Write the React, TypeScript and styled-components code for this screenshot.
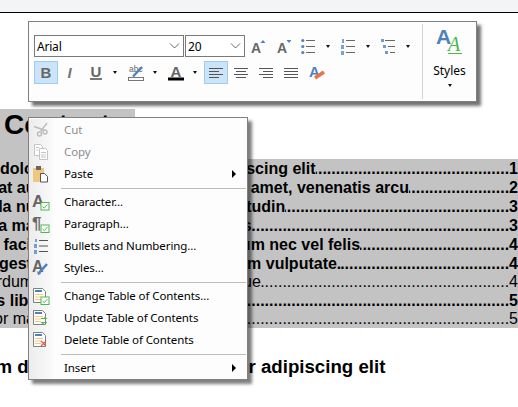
import React from 'react';
import styled, { createGlobalStyle } from 'styled-components';

const GlobalStyle = createGlobalStyle`
  html, body {
    margin: 0;
    padding: 0;
    background: #fff;
    overflow: hidden;
  }
  body {
    font-family: "Liberation Sans", Arial, sans-serif;
  }
`;

const Page = styled.div`
  position: relative;
  width: 518px;
  height: 407px;
  overflow: hidden;
`;

const TopBar = styled.div`
  height: 12px;
  background: #f3f4f6;
  border-bottom: 1px solid #000;
`;

const Doc = styled.div`
  padding-top: 96px;
  color: #000;
`;

const Title = styled.h1`
  box-sizing: border-box;
  width: 135px;
  height: 50px;
  margin: 0;
  padding-left: 4px;
  background: #c3c3c3;
  font-size: 28px;
  font-weight: 700;
  line-height: 32px;
  white-space: nowrap;
`;

const TocBlock = styled.div`
  background: #c3c3c3;
  overflow: hidden;
`;

const TocRow = styled.div<{ $bold: boolean; $indent: number }>`
  display: flex;
  margin-left: ${(p) => p.$indent}px;
  height: ${(p) => (p.$bold ? 19 : 18)}px;
  line-height: ${(p) => (p.$bold ? 19 : 18)}px;
  font-size: 16px;
  font-weight: ${(p) => (p.$bold ? 700 : 400)};
  white-space: nowrap;
`;

const Leader = styled.span`
  flex: 1;
  min-width: 0;
  overflow: hidden;
  direction: rtl;
`;

const Heading2 = styled.h2`
  margin: 28px 0 0 -105px;
  font-size: 18.67px;
  line-height: 22px;
  font-weight: 700;
  white-space: nowrap;
`;

const Toolbar = styled.div`
  position: absolute;
  left: 28px;
  top: 21px;
  box-sizing: border-box;
  width: 449px;
  height: 81px;
  display: flex;
  background: #fdfdfd;
  border: 1px solid #808080;
  box-shadow: 4px 4px 3px rgba(0, 0, 0, 0.55);
`;

const ToolRows = styled.div`
  width: 393px;
  box-sizing: border-box;
  padding: 13px 0 0 5px;
  display: flex;
  flex-direction: column;
  gap: 4px;
`;

const ToolRow = styled.div`
  display: flex;
  align-items: center;
  height: 22px;
`;

const ToolRowTall = styled(ToolRow)`
  height: 23px;
`;

const SelectBox = styled.div<{ $w: number; $mr?: number }>`
  box-sizing: border-box;
  width: ${(p) => p.$w}px;
  height: 22px;
  margin-right: ${(p) => p.$mr ?? 0}px;
  display: flex;
  align-items: center;
  justify-content: space-between;
  padding: 0 3px 0 2px;
  background: #fff;
  border: 1px solid #7a7a7a;
  font-family: "Noto Sans", sans-serif;
  font-size: 12px;
  letter-spacing: -0.2px;
  color: #000;
`;

const ToolCell = styled.div<{ $w: number; $active?: boolean }>`
  box-sizing: border-box;
  width: ${(p) => p.$w}px;
  height: 23px;
  flex: none;
  display: flex;
  align-items: center;
  justify-content: center;
  background: ${(p) => (p.$active ? '#cce4f7' : 'transparent')};
  border: 1px solid ${(p) => (p.$active ? '#9bcdf5' : 'transparent')};
`;

const Caret = styled.span<{ $ml?: number; $mr?: number }>`
  flex: none;
  width: 0;
  height: 0;
  margin: 0 ${(p) => (p.$mr ?? 0) + 1.5}px 0 ${(p) => (p.$ml ?? 0) + 1.5}px;
  border-left: 2.5px solid transparent;
  border-right: 2.5px solid transparent;
  border-top: 3px solid #111;
`;

const GlyphB = styled.span`
  font-size: 15px;
  font-weight: 700;
  color: #666;
`;

const GlyphI = styled(GlyphB)`
  font-style: italic;
  color: #777;
`;

const GlyphU = styled(GlyphB)`
  line-height: 13px;
  border-bottom: 2px solid #777;
  padding: 0 1px;
`;

const StylesPanel = styled.div`
  margin: 2px 0;
  flex: 1;
  display: flex;
  flex-direction: column;
  align-items: center;
  border-left: 1px solid #d2d2d2;
  padding-top: 5px;
  font-family: "Noto Sans", sans-serif;
  font-size: 12px;
  color: #000;
`;

const StylesLabel = styled.span`
  margin-top: 9px;
  line-height: 16px;
`;

const StylesCaret = styled(Caret)`
  margin-top: 5px;
`;

const Menu = styled.div`
  position: absolute;
  left: 28px;
  top: 117px;
  box-sizing: border-box;
  width: 220px;
  padding-top: 1px;
  background: #fdfdfd;
  border: 1px solid #808080;
  box-shadow: 4px 4px 3px rgba(0, 0, 0, 0.5);
  font-family: "Noto Sans", sans-serif;
  font-size: 11.5px;
  letter-spacing: -0.1px;
`;

const Gutter = styled.div`
  flex: none;
  width: 24px;
  align-self: stretch;
  display: flex;
  align-items: center;
  justify-content: center;
  background: linear-gradient(to right, #ececec, #fafafa);
`;

const MenuRow = styled.div<{ $disabled?: boolean }>`
  display: flex;
  align-items: center;
  height: 22px;
  color: ${(p) => (p.$disabled ? '#8d8d8d' : '#000')};
`;

const MenuLabel = styled.span`
  flex: 1;
  padding: 0 0 2px 11px;
  white-space: nowrap;
`;

const SubArrow = styled.span`
  width: 0;
  height: 0;
  margin-right: 11px;
  border-top: 4px solid transparent;
  border-bottom: 4px solid transparent;
  border-left: 4px solid #000;
`;

const SepRow = styled.div`
  display: flex;
  align-items: center;
  height: 6px;
`;

const SepLine = styled.div`
  flex: 1;
  height: 1px;
  margin: 0 1px 0 8px;
  background: #bdbdbd;
`;

const BLUE = '#4f81bd';
const GREY = '#666';
const GREEN = '#4cb84c';
const ORANGE = '#e8734a';
const TAN = '#f0c87c';

const Chevron = () => (
  <svg width="11" height="6" viewBox="0 0 11 6" fill="none" stroke="#666">
    <path d="M1 .5l4.5 4.5L10 .5" />
  </svg>
);

const Align = ({ kind }: { kind: 'left' | 'center' | 'right' | 'full' }) => {
  const rows = [14, kind === 'full' ? 14 : 10, 14, kind === 'full' ? 14 : 10];
  return (
    <svg width="14" height="11" viewBox="0 0 14 11" stroke="#555">
      {rows.map((w, i) => {
        const x = kind === 'left' || kind === 'full' ? 0 : kind === 'right' ? 14 - w : (14 - w) / 2;
        return <path key={i} d={`M${x} ${i * 3 + 1}.5h${w}`} />;
      })}
    </svg>
  );
};

const SizeA = ({ up }: { up: boolean }) => (
  <svg width="14" height="15" viewBox="0 0 14 15">
    <text x="0" y="14" fontSize="14" fontWeight="700" fill={GREY} fontFamily="Liberation Sans">A</text>
    <path d={up ? 'M9.5 4l2.5-3 2.5 3z' : 'M9.5 1h5l-2.5 3z'} fill={BLUE} />
  </svg>
);

const ListLines = ({ x = 5 }: { x?: number }) => (
  <path d={`M${x} 2.5h9M${x} 8.5h9M${x} 14.5h9`} stroke="#666" />
);

const BulletList = () => (
  <svg width="14" height="17" viewBox="0 0 14 17">
    <circle cx="1.8" cy="2.5" r="1.6" fill={BLUE} />
    <circle cx="1.8" cy="8.5" r="1.6" fill={BLUE} />
    <circle cx="1.8" cy="14.5" r="1.6" fill={BLUE} />
    <ListLines />
  </svg>
);

const NumberList = () => (
  <svg width="14" height="17" viewBox="0 0 14 17">
    <path d="M1 1h2v4H1zM0 7h3v4H0zM0 13h3v4H0z" fill={BLUE} opacity=".75" />
    <ListLines />
  </svg>
);

const OutlineList = () => (
  <svg width="14" height="17" viewBox="0 0 14 17">
    <path d="M0 1h3v3H0zM2 7h3v3H2zM4 13h3v3H4z" fill={BLUE} opacity=".8" />
    <path d="M4 2.5h10M7 8.5h7M9 14.5h5" stroke="#666" />
  </svg>
);

const Highlight = () => (
  <svg width="16" height="16" viewBox="0 0 16 16">
    <text x="1" y="7" fontSize="8.5" fill={GREY} fontFamily="Liberation Sans">abc</text>
    <path d="M5 11.5L14 2" stroke={BLUE} strokeWidth="2.4" />
    <rect x=".5" y="12.5" width="15" height="3" fill="#fff" stroke="#777" />
  </svg>
);

const FontColor = () => (
  <svg width="16" height="16" viewBox="0 0 16 16">
    <text x="2.6" y="11.5" fontSize="15" fontWeight="700" fill={GREY} fontFamily="Liberation Sans">A</text>
    <rect y="12.5" width="16" height="3" fill="#000" />
  </svg>
);

const ClearFormat = () => (
  <svg width="16" height="15" viewBox="0 0 16 15">
    <text x="0" y="12" fontSize="15" fontWeight="700" fill={BLUE} fontFamily="Liberation Sans">A</text>
    <path d="M6 13l9-6" stroke={ORANGE} strokeWidth="3.6" />
  </svg>
);

const StylesIcon = () => (
  <svg width="27" height="25" viewBox="0 0 27 25">
    <text x="0" y="15" fontSize="21" fontWeight="700" fill={BLUE} fontFamily="Liberation Sans">A</text>
    <text x="12" y="22" fontSize="20" fontStyle="italic" fill={GREEN} fontFamily="Liberation Serif">A</text>
    <path d="M12 24.5h14" stroke={GREEN} />
  </svg>
);

const Check = ({ x, y }: { x: number; y: number }) => (
  <g transform={`translate(${x} ${y})`}>
    <rect x=".5" y=".5" width="8" height="7.5" fill="#fff" stroke={GREEN} />
    <path d="M2 4.5l1.8 1.6L7 2.5" fill="none" stroke={GREEN} />
  </g>
);

const TocDoc = ({ children }: { children?: React.ReactNode }) => (
  <svg width="18" height="18" viewBox="0 0 18 18">
    <path d="M1.5 1.5h9l3 3v11h-12z" fill="#fff" stroke="#808080" />
    <rect x="3" y="3" width="7" height="2" fill={BLUE} />
    <path d="M3 7.5h8M3 10h6M3 12.5h6" stroke={TAN} />
    {children}
  </svg>
);

const menuIcons: Record<string, React.ReactNode> = {
  cut: (
    <svg width="16" height="16" viewBox="0 0 16 16" fill="none" stroke="#bcbcbc" strokeWidth="1.4">
      <path d="M14 1L7.5 9.5M1 4.5l10 3.5" />
      <circle cx="6.5" cy="12" r="2" />
      <circle cx="12" cy="10" r="2" />
    </svg>
  ),
  copy: (
    <svg width="16" height="16" viewBox="0 0 16 16" fill="#fff" stroke="#c4c4c4">
      <path d="M1.5 .5h6l2 2v9h-8z" />
      <path d="M6.5 4.5h6l2 2v9h-8z" />
      <path d="M3 3.5h3M3 6h2M8 8.5h5M8 11h5M8 13h5" />
    </svg>
  ),
  paste: (
    <svg width="16" height="18" viewBox="0 0 16 18">
      <rect y="3" width="11" height="14" fill={TAN} />
      <rect x="3" y="1" width="5" height="4" fill="#666" />
      <path d="M7.5 8.5h4l3 3v5.5h-7z" fill="#fff" stroke="#555" />
    </svg>
  ),
  character: (
    <svg width="18" height="18" viewBox="0 0 18 18">
      <text x="0" y="14" fontSize="17" fontWeight="700" fill={GREY} fontFamily="Liberation Sans">A</text>
      <Check x={8.5} y={9} />
    </svg>
  ),
  paragraph: (
    <svg width="18" height="18" viewBox="0 0 18 18">
      <text x="0" y="14" fontSize="17" fontWeight="700" fill={GREY} fontFamily="Liberation Sans">¶</text>
      <Check x={8.5} y={9.5} />
    </svg>
  ),
  bullets: (
    <svg width="14" height="16" viewBox="0 0 14 16">
      <path d="M1 1h2v3H1zM0 6h3v4H0zM0 12h3v4H0z" fill={BLUE} opacity=".75" />
      <path d="M5 2.5h9M5 8h9M5 13.5h9" stroke="#555" />
    </svg>
  ),
  styles: (
    <svg width="18" height="18" viewBox="0 0 18 18">
      <text x="0" y="13" fontSize="16" fontWeight="700" fill={GREY} fontFamily="Liberation Sans">A</text>
      <path d="M7 14l8-9" stroke={BLUE} strokeWidth="2.6" />
      <path d="M5 12l4 3-3 1z" fill={BLUE} />
    </svg>
  ),
  change: (
    <TocDoc>
      <Check x={8.5} y={9.5} />
    </TocDoc>
  ),
  update: (
    <TocDoc>
      <path d="M9 9.5h5l-1.5-1.5M15 13.5h-5l1.5 1.5" fill="none" stroke={GREEN} strokeWidth="1.2" />
    </TocDoc>
  ),
  remove: (
    <TocDoc>
      <path d="M9 10l5 5M14 10l-5 5" stroke="#e05a4a" strokeWidth="1.2" />
    </TocDoc>
  ),
};

type Entry =
  | { sep: true }
  | { sep?: false; label: string; icon?: string; disabled?: boolean; sub?: boolean };

const entries: Entry[] = [
  { label: 'Cut', icon: 'cut', disabled: true },
  { label: 'Copy', icon: 'copy', disabled: true },
  { label: 'Paste', icon: 'paste', sub: true },
  { sep: true },
  { label: 'Character...', icon: 'character' },
  { label: 'Paragraph...', icon: 'paragraph' },
  { label: 'Bullets and Numbering...', icon: 'bullets' },
  { label: 'Styles...', icon: 'styles' },
  { sep: true },
  { label: 'Change Table of Contents...', icon: 'change' },
  { label: 'Update Table of Contents', icon: 'update' },
  { label: 'Delete Table of Contents', icon: 'remove' },
  { sep: true },
  { label: 'Insert', sub: true },
];

const tocRows = [
  { text: 'Lorem ipsum dolor sit amet, consectetur adipiscing elit', page: 1, bold: true },
  { text: 'Suspendisse at auctor, tellus pretium dolor sit amet, venenatis arcu', page: 2, bold: true },
  { text: 'Phasellus nulla nunc ipsum tellus dolor sollicitudin', page: 3, bold: true },
  { text: 'Pellentesque a magna tristique lectus faucibus', page: 3, bold: true },
  { text: 'Vestibulum id facilisis tempus dolor lacus ipsum nec vel felis', page: 4, bold: true },
  { text: 'Curabitur id egestas faucibus dolor lacus ipsum vulputate.', page: 4, bold: true },
  { text: 'Interdum et malesuada fames nec augue', page: 4, bold: false },
  { text: 'Integer cursus libero at ipsum tempus dolor', page: 5, bold: true },
  { text: 'Dolor mauris in ante et malesuada', page: 5, bold: false },
];

export default function App() {
  return (
    <Page>
      <GlobalStyle />
      <TopBar />
      <Doc>
        <Title>Contents</Title>
        <TocBlock>
          {tocRows.map(({ text, page, bold }) => (
            <TocRow key={text} $bold={bold} $indent={bold ? -105 : -30}>
              <span>{text}</span>
              <Leader>{'.'.repeat(140)}</Leader>
              <span>{page}</span>
            </TocRow>
          ))}
        </TocBlock>
        <Heading2>Lorem ipsum dolor sit amet, consectetur adipiscing elit</Heading2>
      </Doc>

      <Toolbar>
        <ToolRows>
          <ToolRow>
            <SelectBox $w={150} $mr={1}>
              Arial
              <Chevron />
            </SelectBox>
            <SelectBox $w={60}>
              20
              <Chevron />
            </SelectBox>
            <ToolCell $w={26}>
              <SizeA up />
            </ToolCell>
            <ToolCell $w={25}>
              <SizeA up={false} />
            </ToolCell>
            <ToolCell $w={24}>
              <BulletList />
            </ToolCell>
            <Caret $ml={4} $mr={5} />
            <ToolCell $w={24}>
              <NumberList />
            </ToolCell>
            <Caret $ml={4} $mr={5} />
            <ToolCell $w={24}>
              <OutlineList />
            </ToolCell>
            <Caret $ml={4} />
          </ToolRow>
          <ToolRowTall>
            <ToolCell $w={24} $active>
              <GlyphB>B</GlyphB>
            </ToolCell>
            <ToolCell $w={23}>
              <GlyphI>I</GlyphI>
            </ToolCell>
            <ToolCell $w={30}>
              <GlyphU>U</GlyphU>
            </ToolCell>
            <Caret $mr={3} />
            <ToolCell $w={30}>
              <Highlight />
            </ToolCell>
            <Caret $mr={3} />
            <ToolCell $w={30}>
              <FontColor />
            </ToolCell>
            <Caret $mr={6} />
            <ToolCell $w={24} $active>
              <Align kind="left" />
            </ToolCell>
            <ToolCell $w={25}>
              <Align kind="center" />
            </ToolCell>
            <ToolCell $w={25}>
              <Align kind="right" />
            </ToolCell>
            <ToolCell $w={25}>
              <Align kind="full" />
            </ToolCell>
            <ToolCell $w={27}>
              <ClearFormat />
            </ToolCell>
          </ToolRowTall>
        </ToolRows>
        <StylesPanel>
          <StylesIcon />
          <StylesLabel>Styles</StylesLabel>
          <StylesCaret />
        </StylesPanel>
      </Toolbar>

      <Menu>
        {entries.map((entry, i) =>
          entry.sep ? (
            <SepRow key={i}>
              <Gutter />
              <SepLine />
            </SepRow>
          ) : (
            <MenuRow key={entry.label} $disabled={entry.disabled}>
              <Gutter>{entry.icon && menuIcons[entry.icon]}</Gutter>
              <MenuLabel>{entry.label}</MenuLabel>
              {entry.sub && <SubArrow />}
            </MenuRow>
          ),
        )}
      </Menu>
    </Page>
  );
}
